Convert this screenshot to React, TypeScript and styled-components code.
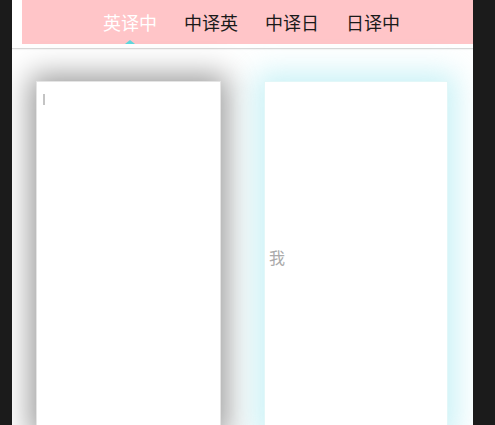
import styled, { createGlobalStyle } from "styled-components";

const tabs = ["英译中", "中译英", "中译日", "日译中"];

export default function App() {
  return (
    <>
      <GlobalStyle />
      <Page>
        <Header>
          <TabList>
            {tabs.map((t, i) => (
              <Tab key={t} $active={i === 0}>
                {t}
                {i === 0 && <Indicator />}
              </Tab>
            ))}
          </TabList>
        </Header>
        <Divider />
        <Panels>
          <InputCard>
            <Caret />
          </InputCard>
          <OutputCard>
            <OutputText>我</OutputText>
          </OutputCard>
        </Panels>
      </Page>
    </>
  );
}

const GlobalStyle = createGlobalStyle`
  html, body {
    margin: 0;
    padding: 0;
    background: #1b1b1b;
    height: 100%;
    overflow: hidden;
  }
  body {
    font-family: "Noto Sans CJK SC", "Noto Sans", sans-serif;
  }
`;

const Page = styled.div`
  margin-left: 12px;
  width: 461px;
  height: 425px;
  background: #fff;
  overflow: hidden;
`;

const Header = styled.div`
  margin-left: 10px;
  height: 44px;
  background: #ffc5c8;
  display: flex;
  justify-content: center;
  padding-left: 8px;
`;

const TabList = styled.div`
  display: flex;
  gap: 27px;
  height: 100%;
`;

const Tab = styled.div<{ $active?: boolean }>`
  position: relative;
  font-size: 18px;
  line-height: 44px;
  color: ${(p) => (p.$active ? "#fff" : "#1a1a1a")};
`;

const Indicator = styled.span`
  position: absolute;
  left: 50%;
  bottom: 0;
  width: 0;
  height: 0;
  margin-left: -5px;
  border-left: 5px solid transparent;
  border-right: 5px solid transparent;
  border-bottom: 4px solid #5dd6dc;
`;

const Divider = styled.div`
  margin-top: 4px;
  height: 1px;
  background: #d8d8d8;
  box-shadow: 0 1px 1px rgba(0, 0, 0, 0.05);
`;

const Panels = styled.div`
  display: grid;
  grid-template-columns: 185px 184px;
  gap: 43px;
  padding: 32px 24px 0;
`;

const Card = styled.div`
  height: 352px;
  background: #fff;
  box-sizing: border-box;
`;

const InputCard = styled(Card)`
  border: 1px solid #e4e4e4;
  box-shadow: 0 0 28px 6px rgba(0, 0, 0, 0.4);
  padding: 12px 6px;
`;

const Caret = styled.div`
  width: 2px;
  height: 11px;
  background: #c4c4c4;
`;

const OutputCard = styled(Card)`
  border: 1px solid #e2f7f8;
  box-shadow: 0 0 28px 8px rgba(130, 225, 236, 0.45);
  display: flex;
  align-items: center;
  padding-left: 4px;
`;

const OutputText = styled.span`
  font-size: 16px;
  color: #aaa;
`;
